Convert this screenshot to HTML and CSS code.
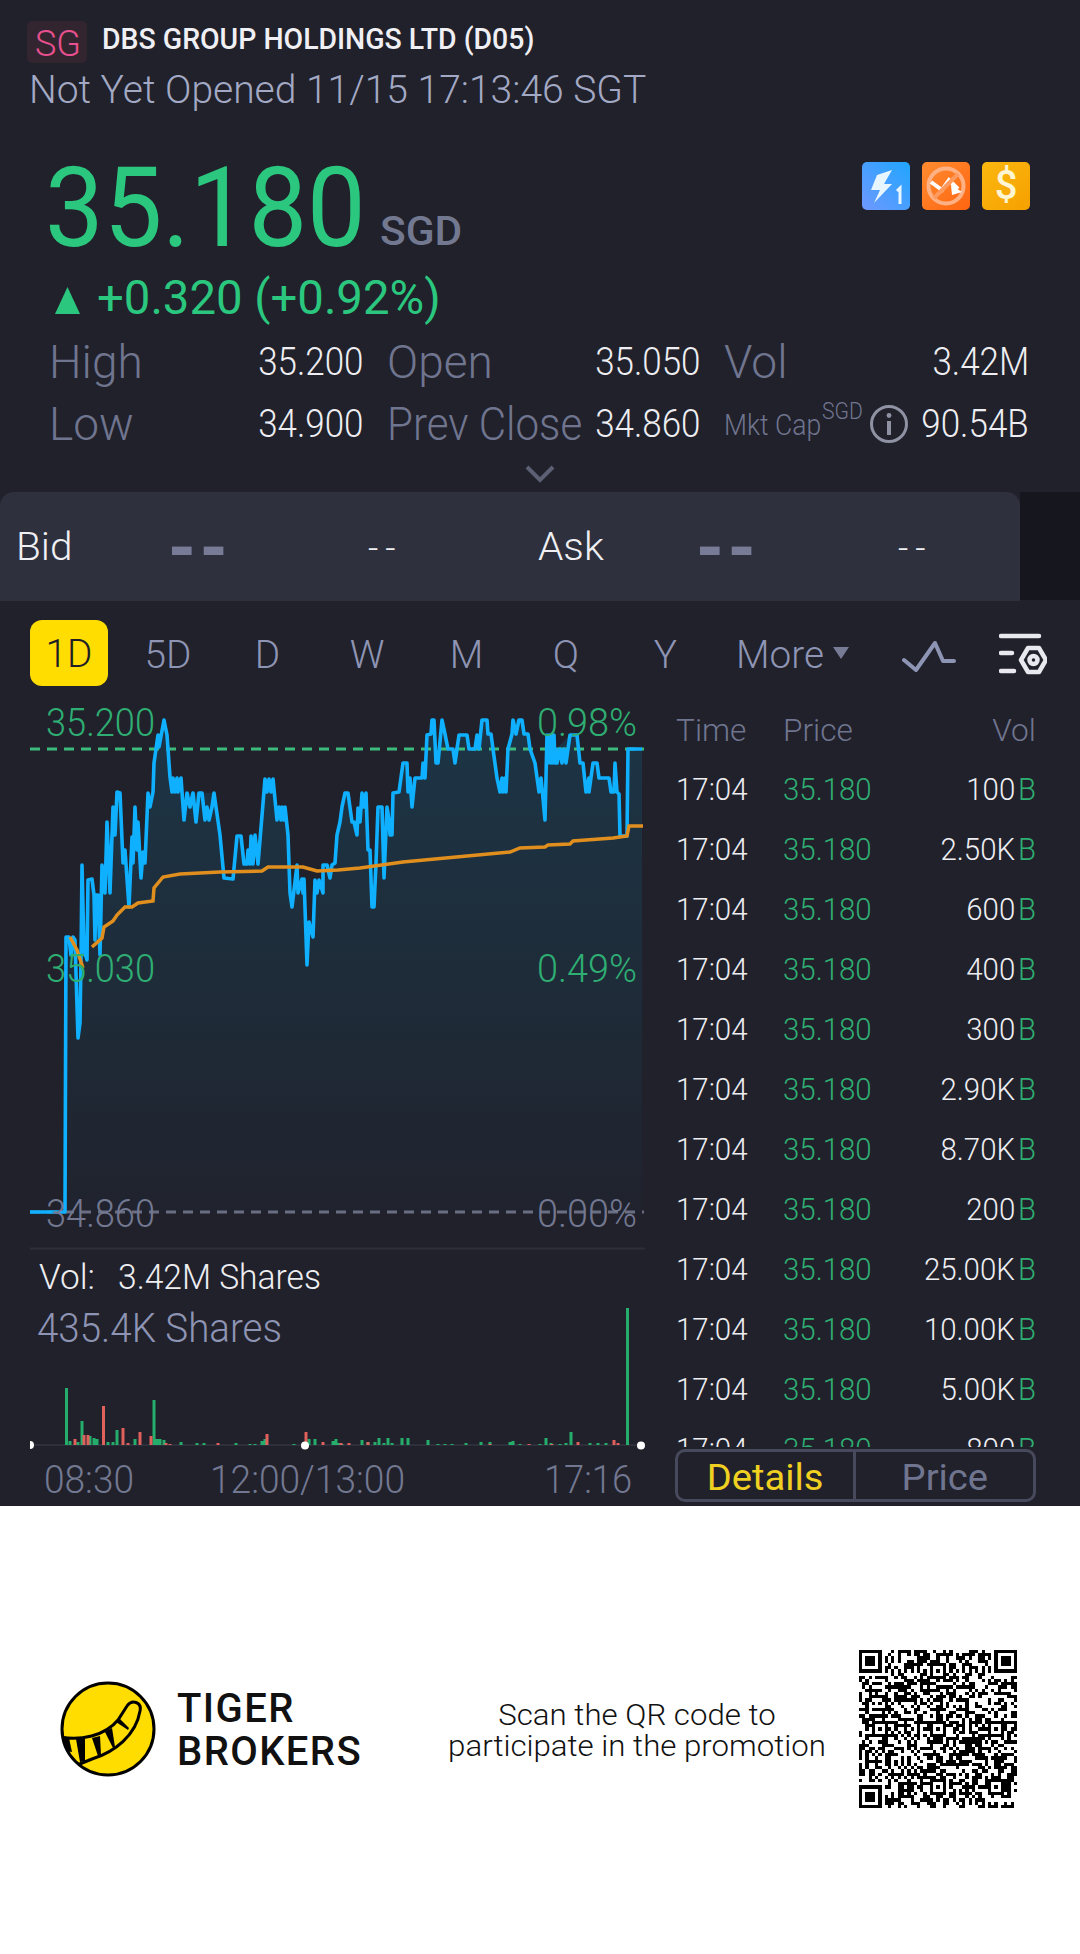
FILE: index.html
```html
<!DOCTYPE html>
<html lang="en">
<head>
<meta charset="utf-8">
<title>DBS Group Holdings Ltd (D05)</title>
<link rel="stylesheet" href="styles.css">
</head>
<body>
<main class="app">
  <header class="head">
    <div class="title-row">
      <span class="market"><span class="n">SG</span></span>
      <h1 class="title"><span class="n">DBS GROUP HOLDINGS LTD (D05)</span></h1>
    </div>
    <div class="status"><span class="n">Not Yet Opened 11/15 17:13:46 SGT</span></div>
  </header>

  <section class="quote">
    <div class="price-row">
      <div class="price"><span class="n price-num">35.180</span><span class="n currency">SGD</span></div>
      <div class="badges">
        <svg class="badge" viewBox="0 0 48 48"><defs><linearGradient id="gb" x1="1" y1="0" x2="0" y2="1"><stop offset="0" stop-color="#1fa6ff"/><stop offset="1" stop-color="#6f98ff"/></linearGradient></defs><rect width="48" height="48" rx="5" fill="url(#gb)"/><polygon points="30,8 15,13 9,28 18,28 12,41 30,22 22,22" fill="#e8f6ff"/><path d="M35 29l3-3v16" fill="none" stroke="#e8f6ff" stroke-width="3"/></svg>
        <svg class="badge" viewBox="0 0 48 48"><defs><linearGradient id="go" x1="0" y1="0" x2="1" y2="1"><stop offset="0" stop-color="#ff8c30"/><stop offset="1" stop-color="#ff6510"/></linearGradient></defs><rect width="48" height="48" rx="5" fill="url(#go)"/><circle cx="24" cy="24" r="17.5" fill="none" stroke="#ffb184" stroke-width="4"/><path d="M9 20l11 8 7-10 9 9" fill="none" stroke="#fff" stroke-width="4"/><polygon points="29,23 40,30 30,33" fill="#fff"/><path d="M12 36L36 12" stroke="#ff9a5f" stroke-width="4"/></svg>
        <span class="badge badge-dollar">$</span>
      </div>
    </div>
    <div class="change"><svg class="tri" viewBox="0 0 25 27"><polygon points="12.5,0 25,27 0,27"/></svg><span class="n">+0.320 (+0.92%)</span></div>
    <div class="stats">
      <div class="cell"><span class="n lbl">High</span><span class="nr val">35.200</span></div>
      <div class="cell"><span class="n lbl">Open</span><span class="nr val">35.050</span></div>
      <div class="cell"><span class="n lbl">Vol</span><span class="nr val">3.42M</span></div>
      <div class="cell"><span class="n lbl">Low</span><span class="nr val">34.900</span></div>
      <div class="cell"><span class="n lbl lbl-long">Prev Close</span><span class="nr val">34.860</span></div>
      <div class="cell cap">
        <span class="cap-label"><span class="n cap-name">Mkt Cap</span><span class="n cap-cur">SGD</span></span>
        <svg class="info" viewBox="0 0 40 40"><circle cx="20" cy="20" r="17.5" fill="none" stroke="#8e92a3" stroke-width="3"/><circle cx="20" cy="11.5" r="2.4" fill="#8e92a3"/><rect x="18" y="17" width="4" height="14" fill="#8e92a3"/></svg>
        <span class="nr val">90.54B</span>
      </div>
    </div>
    <div class="chev"><svg viewBox="0 0 30 18" width="30" height="18"><path d="M2 2l13 13L28 2" fill="none" stroke="#5c6073" stroke-width="4"/></svg></div>
  </section>

  <section class="bidbar">
    <div class="bidpanel">
      <span class="n bidlbl bid-l">Bid</span>
      <span class="heavy heavy-1">--</span>
      <span class="thin thin-1">--</span>
      <span class="n bidlbl ask-l">Ask</span>
      <span class="heavy heavy-2">--</span>
      <span class="thin thin-2">--</span>
    </div>
    <div class="bidside"></div>
  </section>

  <nav class="tabs">
    <span class="tab"><span class="tab-on"><span class="n">1D</span></span></span>
    <span class="tab"><span class="n">5D</span></span>
    <span class="tab"><span class="n">D</span></span>
    <span class="tab"><span class="n">W</span></span>
    <span class="tab"><span class="n">M</span></span>
    <span class="tab"><span class="n">Q</span></span>
    <span class="tab"><span class="n">Y</span></span>
    <span class="more"><span class="n">More</span><svg class="caret" viewBox="0 0 16 12"><polygon points="0,0 16,0 8,12"/></svg></span>
    <svg class="wave" viewBox="0 0 56 34"><path d="M2 21l12 10L33 4l8 18h11" fill="none" stroke="#8e94b3" stroke-width="4" stroke-linejoin="round" stroke-linecap="round"/></svg>
    <svg class="gear" viewBox="0 0 48 46"><g fill="none" stroke="#e8e8ee" stroke-width="4.5" stroke-linecap="round"><path d="M2 3h38M2 20h11M2 38h13"/><path d="M22 27l7-12h11l7 12-7 12H29z" stroke-linejoin="round"/><circle cx="34.500" cy="27" r="4"/></g></svg>
  </nav>

  <section class="market-body">
    <svg class="chart" viewBox="0 686 660 820" aria-label="Intraday chart">
      <defs>
        <linearGradient id="area" gradientUnits="userSpaceOnUse" x1="0" y1="720" x2="0" y2="1212"><stop offset="0" stop-color="#1c3546"/><stop offset=".45" stop-color="#1e2d3b"/><stop offset="1" stop-color="#20232e"/></linearGradient>
      </defs>
      <path fill="url(#area)" d="M65 1212L66 937L69 937L71 955L73 937L75 940L78 1038L80 1023L81 960L82 865L84 950L87 960L88 880L92 879L94 895L95 940L96 895L98 895L100 955L102 865L105 893L107 822L110 893L113 807L115 835L117 792L120 793L123 863L125 850L129 907L132 837L133 863L135 807L137 850L138 822L141 878L143 852L145 863L148 793L150 807L153 792L154 763L158 735L159 747L164 720L167 735L170 777L172 792L181 778L184 820L187 793L199 793L214 793L220 835L224 878L233 879L237 836L241 836L244 864L258 864L265 779L273 779L277 820L285 807L288 835L290 893L292 907L297 865L298 893L304 879L307 965L309 922L313 937L315 880L323 893L323 865L335 863L337 835L345 793L348 793L354 822L357 835L362 793L366 793L368 850L370 850L372 907L374 907L378 807L382 807L384 878L387 807L390 835L393 793L399 792L403 763L407 763L412 807L415 778L422 778L427 735L431 734L432 720L434 720L436 763L438 763L442 720L448 749L453 749L455 763L459 735L467 735L469 749L475 749L482 720L487 720L493 749L500 792L506 792L513 720L519 720L528 734L535 763L539 792L545 820L547 735L556 749L570 735L577 735L580 763L583 763L586 792L593 763L597 763L599 778L609 778L611 792L615 763L617 792L620 836L627 836L628 749L642 749L642 1212Z"/>
      <path class="dash-up" d="M30 749H644"/>
      <path class="dash-base" d="M30 1212H644"/>
      <path class="price-line" d="M30 1212L65 1212L66 937L69 937L71 955L73 937L75 940L78 1038L80 1023L81 960L82 865L84 950L87 960L88 880L92 879L94 895L95 940L96 895L98 895L100 955L102 865L105 893L107 822L110 893L113 807L115 835L117 792L120 793L123 863L125 850L129 907L132 837L133 863L135 807L137 850L138 822L141 878L143 852L145 863L148 793L150 807L153 792L154 763L158 735L159 747L164 720L167 735L170 777L172 792L173 778L175 792L177 778L178 792L181 778L184 820L187 793L190 807L193 793L196 822L199 793L202 793L205 820L207 807L209 820L212 807L214 793L216 807L220 835L224 878L233 879L237 836L241 836L244 864L247 864L248 850L250 864L251 836L253 864L255 835L258 864L265 779L267 792L269 779L271 792L273 779L277 820L279 807L281 820L282 807L284 820L285 807L288 835L290 893L292 907L297 865L298 893L302 879L303 893L304 879L307 965L309 922L313 937L315 880L317 893L319 880L323 893L323 865L327 865L330 878L332 865L335 863L337 835L340 822L342 807L345 793L348 793L352 822L354 822L357 835L358 808L360 822L362 793L364 807L366 793L368 850L370 850L372 907L374 907L376 863L378 807L382 807L384 878L387 807L389 820L390 835L392 835L393 793L399 792L403 763L407 763L408 792L410 778L412 807L415 778L422 778L423 763L425 778L427 735L431 734L432 720L434 720L436 763L438 763L442 720L445 734L448 749L453 749L455 763L459 735L467 735L469 749L475 749L477 735L479 749L482 720L487 720L488 734L491 734L493 749L497 778L500 792L502 778L503 792L505 778L506 792L508 749L512 734L513 720L516 734L519 720L522 720L524 734L528 734L530 749L535 763L539 792L541 778L545 820L547 735L548 763L549 735L551 763L552 735L553 763L554 735L555 763L556 749L557 763L560 749L562 763L564 749L566 763L570 735L577 735L580 763L583 763L586 792L589 778L589 792L593 763L597 763L599 778L609 778L611 792L614 792L615 763L617 792L619 794L620 836L627 836L628 749L642 749"/>
      <path class="avg-line" d="M70 937L77 950L83 968M92 947L102 938L104 927L113 921L117 915L120 912L125 907L132 907L138 903L153 901L154 888L163 877L180 874L220 872L262 871L268 867L303 867L317 871L338 870L360 868L403 862L467 856L510 852L520 848L545 847L548 845L570 844L573 841L613 838L627 836L629 826L643 826"/>
      <text class="ax up" x="46" y="736" textLength="109" lengthAdjust="spacingAndGlyphs">35.200</text>
      <text class="ax up" x="537" y="736" textLength="100" lengthAdjust="spacingAndGlyphs">0.98%</text>
      <text class="ax up" x="46" y="982" textLength="109" lengthAdjust="spacingAndGlyphs">35.030</text>
      <text class="ax up" x="537" y="982" textLength="100" lengthAdjust="spacingAndGlyphs">0.49%</text>
      <text class="ax base" x="46" y="1227" textLength="109" lengthAdjust="spacingAndGlyphs">34.860</text>
      <text class="ax base" x="537" y="1227" textLength="100" lengthAdjust="spacingAndGlyphs">0.00%</text>
      <path class="rule" d="M30 1248.500H645"/>
      <text class="voltxt" x="39" y="1289" textLength="56" lengthAdjust="spacingAndGlyphs">Vol:</text>
      <text class="voltxt" x="118" y="1289" textLength="203" lengthAdjust="spacingAndGlyphs">3.42M Shares</text>
      <text class="volmax" x="37" y="1342" textLength="245" lengthAdjust="spacingAndGlyphs">435.4K Shares</text>
      <path class="rule" d="M30 1445H645"/>
      <path class="bars-g" d="M66.5 1445v-57M70 1445v-4M78 1445v-3M82 1445v-24M90 1445v-9M94 1445v-7M97 1445v-6M108 1445v-3M113 1445v-3M117 1445v-15M135 1445v-6M154 1445v-45M157 1445v-6M160 1445v-6M164 1445v-5M181 1445v-3M197 1445v-2M204 1445v-2M236 1445v-2M250 1445v-1M255 1445v-1M262 1445v-4M265 1445v-6M294 1445v-1M309 1445v-6M315 1445v-6M333 1445v-4M336 1445v-6M339 1445v-2M342 1445v-1M362 1445v-5M368 1445v-3M375 1445v-3M379 1445v-7M384 1445v-2M388 1445v-7M392 1445v-2M402 1445v-7M408 1445v-7M428 1445v-5M438 1445v-1M445 1445v-1M452 1445v-1M466 1445v-2M481 1445v-3M490 1445v-3M510 1445v-3M513 1445v-4M520 1445v-1M540 1445v-1M546 1445v-7M551 1445v-2M560 1445v-1M566 1445v-2M571 1445v-13M590 1445v-2M598 1445v-2M606 1445v-2M627.5 1445v-137"/>
      <path class="bars-r" d="M75 1445v-6M84 1445v-10M88 1445v-10M103.5 1445v-39M123 1445v-17M128 1445v-2M140 1445v-13M151 1445v-9M166 1445v-2M170 1445v-1M218 1445v-2M267 1445v-11M306 1445v-13M323 1445v-3M341 1445v-2M349 1445v-2M368 1445v-3M490 1445v-1M529 1445v-1M552 1445v-1M578 1445v-3M614 1445v-5M618 1445v-2"/>
      <path class="dot" d="M30 1441a4 4 0 0 1 0 8z"/>
      <circle class="dot" cx="305" cy="1445.5" r="4"/>
      <circle class="dot" cx="641" cy="1445.5" r="4"/>
      <text class="xl" x="44" y="1493" textLength="90" lengthAdjust="spacingAndGlyphs">08:30</text>
      <text class="xl" x="210" y="1493" textLength="195" lengthAdjust="spacingAndGlyphs">12:00/13:00</text>
      <text class="xl" x="544" y="1493" textLength="88" lengthAdjust="spacingAndGlyphs">17:16</text>
    </svg>

    <aside class="ticks">
      <div class="tick-list">
        <div class="tick tick-head"><span class="n">Time</span><span class="n">Price</span><span class="nr">Vol</span></div>
        <div class="tick"><span class="n">17:04</span><span class="n g">35.180</span><span class="qty"><span class="nr">100</span><b class="g">B</b></span></div>
        <div class="tick"><span class="n">17:04</span><span class="n g">35.180</span><span class="qty"><span class="nr">2.50K</span><b class="g">B</b></span></div>
        <div class="tick"><span class="n">17:04</span><span class="n g">35.180</span><span class="qty"><span class="nr">600</span><b class="g">B</b></span></div>
        <div class="tick"><span class="n">17:04</span><span class="n g">35.180</span><span class="qty"><span class="nr">400</span><b class="g">B</b></span></div>
        <div class="tick"><span class="n">17:04</span><span class="n g">35.180</span><span class="qty"><span class="nr">300</span><b class="g">B</b></span></div>
        <div class="tick"><span class="n">17:04</span><span class="n g">35.180</span><span class="qty"><span class="nr">2.90K</span><b class="g">B</b></span></div>
        <div class="tick"><span class="n">17:04</span><span class="n g">35.180</span><span class="qty"><span class="nr">8.70K</span><b class="g">B</b></span></div>
        <div class="tick"><span class="n">17:04</span><span class="n g">35.180</span><span class="qty"><span class="nr">200</span><b class="g">B</b></span></div>
        <div class="tick"><span class="n">17:04</span><span class="n g">35.180</span><span class="qty"><span class="nr">25.00K</span><b class="g">B</b></span></div>
        <div class="tick"><span class="n">17:04</span><span class="n g">35.180</span><span class="qty"><span class="nr">10.00K</span><b class="g">B</b></span></div>
        <div class="tick"><span class="n">17:04</span><span class="n g">35.180</span><span class="qty"><span class="nr">5.00K</span><b class="g">B</b></span></div>
        <div class="tick"><span class="n">17:04</span><span class="n g">35.180</span><span class="qty"><span class="nr">800</span><b class="g">B</b></span></div>
      </div>
      <div class="switch"><span class="sw sw-on"><span class="n">Details</span></span><span class="sw"><span class="n">Price</span></span></div>
    </aside>
  </section>
</main>

<footer class="promo">
  <div class="brand">
    <svg class="logo" viewBox="58 1679 100 100">
      <defs><clipPath id="disc"><circle cx="108" cy="1729" r="46"/></clipPath></defs>
      <circle cx="108" cy="1729" r="46" fill="#ffdd00"/>
      <g clip-path="url(#disc)">
        <path d="M60 1737C80 1741 105 1736 118 1720L127 1706C132 1699 142 1702 140 1711C136 1735 115 1752 92 1759L70 1768L55 1760Z" fill="#ffdd00" stroke="#000" stroke-width="3"/>
        <polygon points="60,1737 69,1738 72,1752 60,1750" fill="#000"/>
        <polygon points="76,1739 85,1739 85,1761 80,1762" fill="#000"/>
        <polygon points="92,1738 100,1736 101,1755 98,1756" fill="#000"/>
        <polygon points="105,1732 112,1728 115,1747 113,1748" fill="#000"/>
        <polygon points="116,1722 120,1719 129,1728 128,1730" fill="#000"/>
      </g>
      <circle cx="108" cy="1729" r="46" fill="none" stroke="#000" stroke-width="3"/>
    </svg>
    <div class="brand-name">TIGER<br>BROKERS</div>
  </div>
  <div class="promo-text">Scan the QR code to<br>participate in the promotion</div>
  <svg class="qr" id="qr" viewBox="0 0 49 49" shape-rendering="crispEdges"><path id="qr-path" fill="#000"/></svg>
</footer>
<script src="script.js"></script>
</body>
</html>
```

FILE: styles.css
```css
* { box-sizing: border-box; }
html, body { margin: 0; padding: 0; }
body { width: 1080px; height: 1954px; background: #fff; font-family: Roboto, "Liberation Sans", sans-serif; overflow: hidden; }

.n, .nr { display: inline-block; transform: scaleX(var(--sx, .92)); white-space: nowrap; }
.n { transform-origin: left center; }
.nr { transform-origin: right center; }

.app { height: 1506px; background: #20212b; color: #e8e8ee; display: flex; flex-direction: column; }

.head { padding: 21px 0 0 27px; height: 108px; }
.title-row { display: flex; align-items: center; height: 42px; }
.market { width: 60px; height: 42px; background: #332530; border-radius: 5px; color: #e8508f; font-size: 36px; font-weight: 300; line-height: 46px; padding-left: 8px; --sx: 1; }
.title { margin: -7px 0 0 15px; font-size: 29px; font-weight: 500; line-height: 34px; color: #f0f0f4; --sx: .98; }
.status { margin: 8px 0 0 2px; font-size: 39px; font-weight: 300; line-height: 38px; color: #a3a9c4; --sx: 1; }

.price-row { display: flex; justify-content: space-between; height: 154px; padding: 50px 50px 0 45px; }
.price { display: flex; align-items: flex-start; color: #2bc77e; }
.price-num { font-size: 111px; line-height: 100px; width: 335px; font-weight: 450; --sx: .94; }
.currency { font-size: 40px; font-weight: 500; line-height: 40px; color: #737891; margin-top: 54px; --sx: 1.06; }
.badges { display: flex; gap: 12px; margin-top: 4px; }
.badge { width: 48px; height: 48px; display: block; }
.badge-dollar { background: linear-gradient(135deg, #fbb80f, #f6a000); border-radius: 5px; color: #fff5d2; font-size: 40px; font-weight: 500; line-height: 48px; text-align: center; }

.change { display: flex; align-items: center; height: 45px; margin-top: 13px; padding-left: 55px; font-size: 48px; color: #2bc77e; font-weight: 400; line-height: 45px; --sx: .985; }
.tri { width: 25px; height: 27px; fill: #2bc77e; margin: 6px 17px 0 0; }

.stats { display: grid; grid-template-columns: 314px 313px 305px; column-gap: 24px; padding: 11px 51px 0 49px; grid-auto-rows: 62px; }
.cell { display: flex; justify-content: space-between; align-items: center; }
.lbl { font-size: 46px; font-weight: 300; color: #70758f; --sx: 1; }
.lbl-long { --sx: .915; width: 194px; }
.val { font-size: 38px; font-weight: 350; color: #eeeef2; --sx: .92; }
.cap { justify-content: flex-start; }
.cap-label { display: flex; width: 139px; }
.cap-name { font-size: 29px; font-weight: 300; color: #70758f; width: 98px; padding-top: 2px; --sx: .915; }
.cap-cur { font-size: 23px; font-weight: 300; color: #70758f; margin-top: -8px; --sx: .92; }
.info { width: 40px; height: 40px; margin: 0 0 0 6px; }
.cap .val { margin-left: auto; }
.chev { height: 37px; display: flex; justify-content: center; padding-top: 10px; }

.bidbar { display: flex; height: 109px; flex: none; }
.bidpanel { width: 1020px; background: #2e303e; border-radius: 14px 14px 0 0; display: grid; grid-template-columns: 152px 200px 170px 158px 202px 1fr; align-items: center; padding-left: 16px; --sx: 1.04; }
.bidside { flex: 1; background: #15161e; height: 108px; }
.bidlbl { font-size: 39px; font-weight: 300; color: #f0f0f4; }
.heavy { display: inline-block; font-size: 38px; font-weight: 700; color: #777b96; transform: scale(1.87, 2); transform-origin: left center; letter-spacing: 2px; width: 50px; line-height: 40px; margin-top: 2px; }
.thin { font-size: 36px; font-weight: 300; color: #f0f0f4; letter-spacing: 7px; margin-top: 4px; }

.tabs { display: flex; align-items: center; height: 66px; margin-top: 19px; padding-left: 19px; font-size: 38px; font-weight: 300; color: #8e94b3; flex: none; --sx: 1.02; }
.tab { width: 99.4px; display: flex; justify-content: center; padding-top: 3px; }
.tab .n { transform-origin: center; }
.tab-on { width: 78px; height: 66px; margin-top: -3px; background: #ffdd00; border-radius: 12px; color: #1d1e26; line-height: 69px; text-align: center; display: block; }
.more { display: flex; align-items: center; margin-left: 21px; width: 114px; position: relative; padding-top: 3px; --sx: 1.02; }
.caret { width: 16px; height: 12px; fill: #777b96; position: absolute; left: 97px; top: 17px; }
.wave { width: 56px; height: 34px; margin: 6px 0 0 52px; }
.gear { width: 48px; height: 46px; margin: 6px 0 0 41px; }

.market-body { flex: 1; display: flex; min-height: 0; }
.chart { width: 660px; height: 820px; display: block; flex: none; }
.dash-up { stroke: #3dbb7d; stroke-width: 3; stroke-dasharray: 10 7; fill: none; }
.dash-base { stroke: #6a6e82; stroke-width: 3; stroke-dasharray: 10 7; fill: none; }
.price-line { stroke: #0fb0ff; stroke-width: 3.6; fill: none; stroke-linejoin: round; }
.avg-line { stroke: #e08e1e; stroke-width: 3.5; fill: none; }
.ax { font-size: 38px; font-weight: 350; }
.ax.up { fill: #2fae73; }
.ax.base { fill: #737891; }
.rule { stroke: #2d2f3b; stroke-width: 2; fill: none; }
.voltxt { font-size: 35px; font-weight: 350; fill: #eeeef2; }
.volmax { font-size: 41px; font-weight: 350; fill: #8e94b3; }
.bars-g { stroke: #25ad6b; stroke-width: 3; fill: none; }
.bars-r { stroke: #e0605c; stroke-width: 3; fill: none; }
.dot { fill: #fff; }
.xl { font-size: 38px; font-weight: 350; fill: #737891; }

.ticks { flex: 1; padding-left: 16px; padding-right: 44px; display: flex; flex-direction: column; }
.tick-list { height: 761px; overflow: hidden; padding-top: 15px; flex: none; }
.tick { display: grid; grid-template-columns: 107px 1fr auto; align-items: center; height: 60px; font-size: 32px; font-weight: 350; color: #eeeef2; line-height: 60px; --sx: .92; }
.tick-head { height: 58px; color: #70758f; font-size: 31px; font-weight: 300; --sx: 1.02; }
.tick-head .nr { justify-self: end; }
.g { color: #2fae73; }
.qty { display: flex; justify-content: flex-end; }
.qty b { font-weight: 350; display: inline-block; transform: scaleX(.92); transform-origin: right center; width: 21px; text-align: right; }

.switch { display: flex; height: 53px; margin: 2px 0 0 -1px; border: 3px solid #474a5c; border-radius: 10px; flex: none; }
.sw { flex: 1; display: flex; align-items: center; justify-content: center; font-size: 36px; font-weight: 450; color: #70758f; padding-top: 4px; --sx: 1.06; }
.sw .n { transform-origin: center; }
.sw-on { color: #f0d020; border-right: 3px solid #474a5c; flex: none; width: 178px; }

.promo { height: 448px; display: flex; align-items: flex-start; background: #fff; color: #111; }
.brand { display: flex; align-items: center; width: 379px; margin: 173px 0 0 58px; height: 100px; flex: none; }
.logo { width: 100px; height: 100px; flex: none; }
.brand-name { margin: 2px 0 0 19px; font-size: 40px; font-weight: 500; line-height: 43px; color: #111; letter-spacing: 1.4px; }
.promo-text { width: 400px; flex: none; margin: 193px 0 0 0; font-size: 30px; font-weight: 300; line-height: 31px; text-align: center; white-space: nowrap; transform: scaleX(1.04); }
.qr { width: 158px; height: 158px; margin: 144px 0 0 22px; flex: none; }
```

FILE: script.js
```js
// Draws a QR-style module grid (49×49) as a single SVG path.
(function () {
  var size = 49, cells = [], seed = 9173;
  function rnd() { seed = (seed * 1103515245 + 12345) & 0x7fffffff; return (seed >> 16) / 32767; }
  for (var y = 0; y < size; y++) { cells[y] = []; for (var x = 0; x < size; x++) cells[y][x] = rnd() > 0.5; }
  function square(cx, cy, outer, inner, centre) {
    for (var j = 0; j < outer; j++) for (var i = 0; i < outer; i++) {
      var edge = i === 0 || j === 0 || i === outer - 1 || j === outer - 1;
      var core = i >= inner && j >= inner && i < outer - inner && j < outer - inner;
      if (cy + j < size && cx + i < size) cells[cy + j][cx + i] = edge || (core && centre);
    }
  }
  function clear(cx, cy, w, h) { for (var j = 0; j < h; j++) for (var i = 0; i < w; i++) cells[cy + j][cx + i] = false; }
  clear(0, 0, 8, 8); clear(41, 0, 8, 8); clear(0, 41, 8, 8);
  square(0, 0, 7, 2, true); square(42, 0, 7, 2, true); square(0, 42, 7, 2, true);
  for (var k = 8; k < 41; k++) { cells[6][k] = k % 2 === 0; cells[k][6] = k % 2 === 0; }
  [[6, 24], [24, 6], [24, 24], [42, 24], [24, 42], [42, 42]].forEach(function (p) {
    var c = p[0] - 2, r = p[1] - 2;
    for (var j = 0; j < 5; j++) for (var i = 0; i < 5; i++) {
      var ring = i === 0 || j === 0 || i === 4 || j === 4;
      cells[r + j][c + i] = ring || (i === 2 && j === 2);
    }
  });
  var d = '';
  for (var ry = 0; ry < size; ry++) for (var rx = 0; rx < size; rx++) if (cells[ry][rx]) d += 'M' + rx + ' ' + ry + 'h1v1h-1z';
  document.getElementById('qr-path').setAttribute('d', d);
})();
```
